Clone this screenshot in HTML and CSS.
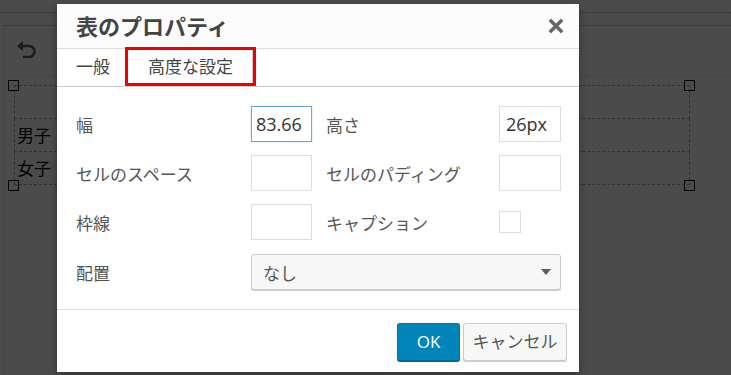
FILE: index.html
```html
<!DOCTYPE html>
<html lang="ja">
<head>
    <meta charset="UTF-8">
    <meta name="viewport" content="width=device-width, initial-scale=1.0">
    <title>表のプロパティ</title>
    <link rel="stylesheet" href="styles.css">
</head>
<body>
    <div class="page">
        <div class="topbar"><div class="dots"></div></div>
        <div class="editor">
            <div class="toolbar">
                <svg class="undo" width="22" height="18" viewBox="0 0 22 18">
                    <polygon points="1,6 7,1 7,11" fill="#1c1c1c"/>
                    <path d="M6 6 H13 A5.5 5.5 0 0 1 13 17 H7" fill="none" stroke="#1c1c1c" stroke-width="2.6"/>
                </svg>
            </div>
            <div class="content">
                <div class="tablewrap">
                    <table class="edtable">
                        <tr><td></td></tr>
                        <tr><td><span class="cell">男子</span></td></tr>
                        <tr><td><span class="cell">女子</span></td></tr>
                    </table>
                    <span class="handle h-tl"></span>
                    <span class="handle h-tr"></span>
                    <span class="handle h-bl"></span>
                    <span class="handle h-br"></span>
                </div>
            </div>
        </div>

        <div class="dialog">
            <div class="dlg_head">
                <div class="dlg_title">表のプロパティ</div>
                <svg class="close" width="14" height="14" viewBox="0 0 14 14">
                    <path d="M2 2 L12 12 M12 2 L2 12" stroke="#666" stroke-width="3.4" stroke-linecap="square"/>
                </svg>
            </div>
            <div class="tabs">
                <div class="tab">一般</div>
                <div class="tab active">高度な設定</div>
            </div>
            <div class="form">
                <div class="lbl">幅</div>
                <div class="field"><div class="inp focus">83.66</div></div>
                <div class="lbl lbl2">高さ</div>
                <div class="field"><div class="inp wide">26px</div></div>

                <div class="lbl">セルのスペース</div>
                <div class="field"><div class="inp"></div></div>
                <div class="lbl lbl2">セルのパディング</div>
                <div class="field"><div class="inp wide"></div></div>

                <div class="lbl">枠線</div>
                <div class="field"><div class="inp"></div></div>
                <div class="lbl lbl2">キャプション</div>
                <div class="field"><div class="check"></div></div>

                <div class="lbl last">配置</div>
                <div class="select">
                    <span>なし</span>
                    <span class="arrow"></span>
                </div>
            </div>
            <div class="dlg_foot">
                <div class="btn ok">OK</div>
                <div class="btn cancel">キャンセル</div>
            </div>
        </div>
    </div>
</body>
</html>
```

FILE: styles.css
```css
*{
    margin: 0;
    padding: 0;
    box-sizing: border-box;
}
body{
    width: 731px;
    height: 375px;
    overflow: hidden;
    background: #4b4b4b;
    font-family: "Open Sans", "Noto Sans CJK JP", sans-serif;
}
.page{
    position: relative;
    width: 731px;
    height: 375px;
}
.topbar{
    height: 25px;
    padding-top: 12px;
}
.dots{
    border-top: 1px dotted #333;
}
.editor{
    margin-left: 3px;
    height: 350px;
    border-left: 1px solid #444;
    border-top: 1px solid #3d3d3d;
}
.toolbar{
    height: 50px;
    border-bottom: 1px solid #454545;
    padding: 14px 0 0 12px;
}
.undo{
    display: block;
}
.content{
    padding: 9px 0 0 10px;
}
.tablewrap{
    position: relative;
    width: 676px;
}
.edtable{
    width: 676px;
    border-collapse: collapse;
}
.edtable td{
    height: 33px;
    border: 1px dashed #333;
    padding: 0 2px;
    font-size: 17px;
    line-height: 20px;
    color: #000;
    white-space: nowrap;
}
.cell{
    display: inline-block;
    vertical-align: middle;
}
.handle{
    position: absolute;
    width: 11px;
    height: 11px;
    border: 1px solid #000;
}
.h-tl{ left: -6px; top: -5px; }
.h-tr{ left: 670px; top: -5px; }
.h-bl{ left: -6px; top: 95px; }
.h-br{ left: 670px; top: 95px; }

.dialog{
    position: absolute;
    left: 57px;
    top: 4px;
    width: 522px;
    height: 368px;
    background: #fff;
    box-shadow: 0 3px 8px rgba(0, 0, 0, 0.35);
}
.dlg_head{
    height: 45px;
    background: #fcfcfc;
    border-bottom: 1px solid #ddd;
    display: flex;
    align-items: center;
    justify-content: space-between;
    padding: 0 16px 0 19px;
}
.dlg_title{
    font-size: 22px;
    font-weight: bold;
    color: #444;
    line-height: 28px;
}
.close{
    display: block;
}
.tabs{
    display: flex;
    height: 38px;
    border-bottom: 1px solid #ccc;
}
.tab{
    padding: 0 19px;
    font-size: 17px;
    line-height: 36px;
    color: #444;
}
.tab.active{
    position: relative;
    border-right: 1px solid #ccc;
}
.tab.active::after{
    content: "";
    position: absolute;
    left: -4px;
    right: -4px;
    top: -2px;
    bottom: 0;
    border: 3px solid #f00000;
}
.form{
    display: grid;
    grid-template-columns: 175px 61px 187px 62px;
    grid-template-rows: 36px 36px 36px 37px;
    row-gap: 13px;
    padding: 19px 18px 19px 19px;
    border-bottom: 1px solid #ddd;
}
.lbl{
    display: flex;
    align-items: center;
    font-size: 17px;
    color: #555;
    white-space: nowrap;
}
.lbl.last{
    margin-top: 1px;
}
.lbl2{
    padding-left: 14px;
}
.field{
    display: flex;
    align-items: center;
}
.inp{
    width: 61px;
    height: 36px;
    border: 1px solid #ddd;
    background: #fff;
    padding-left: 4px;
    font-size: 18px;
    line-height: 34px;
    color: #333;
}
.inp.wide{
    width: 62px;
    padding-left: 6px;
}
.inp.focus{
    border-color: #6aa8de;
    box-shadow: 0 0 1px rgba(30, 140, 190, 0.6);
}
.check{
    width: 22px;
    height: 22px;
    border: 1px solid #ddd;
}
.select{
    grid-column: 2 / 5;
    display: flex;
    align-items: center;
    justify-content: space-between;
    margin-top: 1px;
    padding: 0 9px 0 11px;
    height: 36px;
    background: #f7f7f7;
    border: 1px solid #ccc;
    border-radius: 3px;
    box-shadow: 0 1px 0 #ccc;
    font-size: 17px;
    color: #555;
}
.arrow{
    width: 0;
    height: 0;
    border-left: 5px solid transparent;
    border-right: 5px solid transparent;
    border-top: 6px solid #555d66;
}
.dlg_foot{
    display: flex;
    justify-content: flex-end;
    gap: 3px;
    padding: 13px 12px 0 0;
}
.btn{
    height: 38px;
    border-radius: 3px;
    font-size: 17px;
    line-height: 36px;
    text-align: center;
}
.ok{
    width: 63px;
    background: #0085ba;
    border: 1px solid #0073aa;
    border-bottom-color: #006799;
    box-shadow: 0 1px 0 #006799;
    color: #fff;
}
.cancel{
    width: 104px;
    background: #f7f7f7;
    border: 1px solid #ccc;
    box-shadow: 0 1px 0 #ccc;
    color: #555;
}
```
